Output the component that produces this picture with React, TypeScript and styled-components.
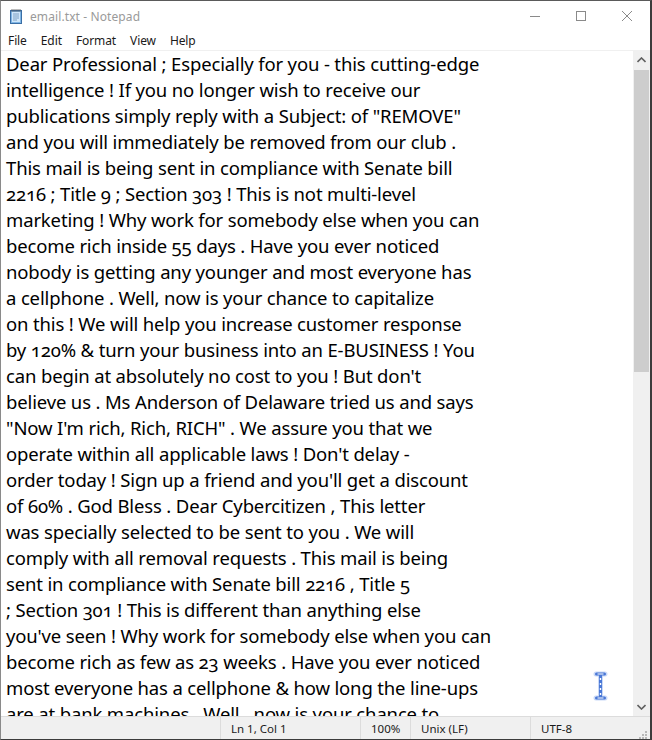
import React from "react";
import styled, { createGlobalStyle } from "styled-components";

const Global = createGlobalStyle`
  html, body { margin: 0; padding: 0; background: #ffffff; overflow: hidden; }
  body { width: 652px; height: 740px; }
  #root { width: 652px; height: 740px; }
`;

const Window = styled.div`
  width: 652px;
  height: 740px;
  box-sizing: border-box;
  border-top: 1px solid #5a5a5a;
  border-left: 1px solid #8a8a8a;
  border-right: 2px solid #3c3c3c;
  border-bottom: 1px solid #3c3c3c;
  display: flex;
  flex-direction: column;
  background: #ffffff;
  position: relative;
  font-family: "Noto Sans", "Segoe UI", sans-serif;
`;

const TitleBar = styled.div`
  height: 30px;
  display: flex;
  align-items: center;
  background: #ffffff;
`;

const AppIcon = styled.div`
  width: 16px;
  height: 16px;
  margin-left: 7px;
  margin-right: 6px;
  display: flex;
`;

const Title = styled.div`
  flex: 1;
  font-size: 12px;
  color: #9a9a9a;
  letter-spacing: 0.1px;
`;

const Controls = styled.div`
  display: flex;
  height: 100%;
`;

const CtrlButton = styled.div`
  width: 46px;
  height: 100%;
  display: flex;
  align-items: center;
  justify-content: center;
`;

const MenuBar = styled.div`
  height: 19px;
  display: flex;
  align-items: center;
  border-bottom: 1px solid #f0f0f0;
`;

const MenuItem = styled.div`
  font-size: 12px;
  color: #1a1a1a;
  padding: 0 7px 0 7px;
  letter-spacing: -0.1px;
`;

const Body = styled.div`
  flex: 1;
  display: flex;
  min-height: 0;
`;

const TextArea = styled.div`
  flex: 1;
  overflow: hidden;
  padding-left: 5px;
  font-family: "Noto Sans", sans-serif;
  font-variant-numeric: oldstyle-nums;
  font-size: 18.5px;
  line-height: 26px;
  color: #000;
  letter-spacing: -0.15px;
`;

const Line = styled.div`
  white-space: pre;
  height: 26px;
`;

const ScrollBar = styled.div`
  width: 17px;
  display: flex;
  flex-direction: column;
  background: #f0f0f0;
`;

const ScrollArrow = styled.div`
  height: 18px;
  display: flex;
  align-items: center;
  justify-content: center;
`;

const Track = styled.div`
  flex: 1;
  display: flex;
  flex-direction: column;
  padding: 1px 1px 0 1px;
`;

const Thumb = styled.div`
  height: 302px;
  background: #cdcdcd;
`;

const StatusBar = styled.div`
  height: 22px;
  border-top: 1px solid #dcdcdc;
  background: #f0f0f0;
  display: flex;
  align-items: center;
  position: relative;
`;

const StatusSpacer = styled.div`
  width: 219px;
`;

const StatusCell = styled.div<{ $w: number }>`
  width: ${(p) => p.$w}px;
  height: 100%;
  box-sizing: border-box;
  border-left: 1px solid #dcdcdc;
  padding-left: 10px;
  display: flex;
  align-items: center;
  font-size: 11.5px;
  color: #1a1a1a;
  white-space: nowrap;
  overflow: hidden;
`;

const Grip = styled.div`
  position: absolute;
  right: 2px;
  bottom: 2px;
  width: 12px;
  height: 12px;
`;

const Cursor = styled.div`
  position: absolute;
  left: 590px;
  top: 669px;
  width: 20px;
  height: 32px;
`;

const lines = [
  "Dear Professional ; Especially for you - this cutting-edge",
  "intelligence ! If you no longer wish to receive our",
  'publications simply reply with a Subject: of "REMOVE"',
  "and you will immediately be removed from our club .",
  "This mail is being sent in compliance with Senate bill",
  "2216 ; Title 9 ; Section 303 ! This is not multi-level",
  "marketing ! Why work for somebody else when you can",
  "become rich inside 55 days . Have you ever noticed",
  "nobody is getting any younger and most everyone has",
  "a cellphone . Well, now is your chance to capitalize",
  "on this ! We will help you increase customer response",
  "by 120% & turn your business into an E-BUSINESS ! You",
  "can begin at absolutely no cost to you ! But don't",
  "believe us . Ms Anderson of Delaware tried us and says",
  '"Now I\'m rich, Rich, RICH" . We assure you that we',
  "operate within all applicable laws ! Don't delay -",
  "order today ! Sign up a friend and you'll get a discount",
  "of 60% . God Bless . Dear Cybercitizen , This letter",
  "was specially selected to be sent to you . We will",
  "comply with all removal requests . This mail is being",
  "sent in compliance with Senate bill 2216 , Title 5",
  "; Section 301 ! This is different than anything else",
  "you've seen ! Why work for somebody else when you can",
  "become rich as few as 23 weeks . Have you ever noticed",
  "most everyone has a cellphone & how long the line-ups",
  "are at bank machines . Well , now is your chance to",
];

const NotepadIcon = () => (
  <svg width="16" height="16" viewBox="0 0 16 16">
    <rect x="2.5" y="2.5" width="11" height="13" fill="#7fb6e6" stroke="#3a6ea5" />
    <rect x="4" y="4" width="8" height="10" fill="#cfe6fa" />
    <path d="M5 6h6M5 8h6M5 10h6M5 12h4" stroke="#6a8fb5" strokeWidth="0.8" />
    <path d="M4 1v3M6 1v3M8 1v3M10 1v3M12 1v3" stroke="#555" strokeWidth="0.8" />
  </svg>
);

export default function App() {
  return (
    <>
      <Global />
      <Window>
        <TitleBar>
          <AppIcon>
            <NotepadIcon />
          </AppIcon>
          <Title>email.txt - Notepad</Title>
          <Controls>
            <CtrlButton>
              <svg width="10" height="10" viewBox="0 0 10 10">
                <path d="M0 5.5h10" stroke="#8a8a8a" strokeWidth="1" />
              </svg>
            </CtrlButton>
            <CtrlButton>
              <svg width="10" height="10" viewBox="0 0 10 10">
                <rect x="0.5" y="0.5" width="9" height="9" fill="none" stroke="#8a8a8a" strokeWidth="1" />
              </svg>
            </CtrlButton>
            <CtrlButton>
              <svg width="10" height="10" viewBox="0 0 10 10">
                <path d="M0 0L10 10M10 0L0 10" stroke="#8a8a8a" strokeWidth="1" />
              </svg>
            </CtrlButton>
          </Controls>
        </TitleBar>
        <MenuBar>
          <MenuItem>File</MenuItem>
          <MenuItem>Edit</MenuItem>
          <MenuItem>Format</MenuItem>
          <MenuItem>View</MenuItem>
          <MenuItem>Help</MenuItem>
        </MenuBar>
        <Body>
          <TextArea>
            {lines.map((l, i) => (
              <Line key={i}>{l}</Line>
            ))}
          </TextArea>
          <ScrollBar>
            <ScrollArrow>
              <svg width="9" height="6" viewBox="0 0 9 6">
                <path d="M0.5 5L4.5 1L8.5 5" fill="none" stroke="#606060" strokeWidth="1.6" />
              </svg>
            </ScrollArrow>
            <Track>
              <Thumb />
            </Track>
            <ScrollArrow>
              <svg width="9" height="6" viewBox="0 0 9 6">
                <path d="M0.5 1L4.5 5L8.5 1" fill="none" stroke="#606060" strokeWidth="1.6" />
              </svg>
            </ScrollArrow>
          </ScrollBar>
        </Body>
        <StatusBar>
          <StatusSpacer />
          <StatusCell $w={140}>Ln 1, Col 1</StatusCell>
          <StatusCell $w={50}>100%</StatusCell>
          <StatusCell $w={120}>Unix (LF)</StatusCell>
          <StatusCell $w={100}>UTF-8</StatusCell>
          <Grip>
            <svg width="12" height="12" viewBox="0 0 12 12">
              {[
                [9, 1],
                [6, 4],
                [9, 4],
                [3, 7],
                [6, 7],
                [9, 7],
                [0, 10],
                [3, 10],
                [6, 10],
                [9, 10],
              ].map(([x, y], i) => (
                <rect key={i} x={x} y={y} width="2" height="2" fill="#b8b8b8" />
              ))}
            </svg>
          </Grip>
        </StatusBar>
        <Cursor>
          <svg width="20" height="32" viewBox="0 0 20 32">
            <g fill="none" stroke="#a9c1f2" strokeWidth="5" strokeLinecap="round" strokeLinejoin="round" opacity="0.6">
              <path d="M5 4h9M5 28h9M9.5 4v24" />
            </g>
            <g fill="none" stroke="#4a78d6" strokeWidth="3" strokeLinecap="round" strokeLinejoin="round">
              <path d="M5.5 4h8M5.5 28h8M9.5 4v24" />
            </g>
            <path d="M6.5 4h6M6.5 28h6" stroke="#ffffff" strokeWidth="1" />
            <path d="M9.5 8v2M9.5 13v2M9.5 18v2M9.5 23v2" stroke="#ffffff" strokeWidth="1.4" />
          </svg>
        </Cursor>
      </Window>
    </>
  );
}
